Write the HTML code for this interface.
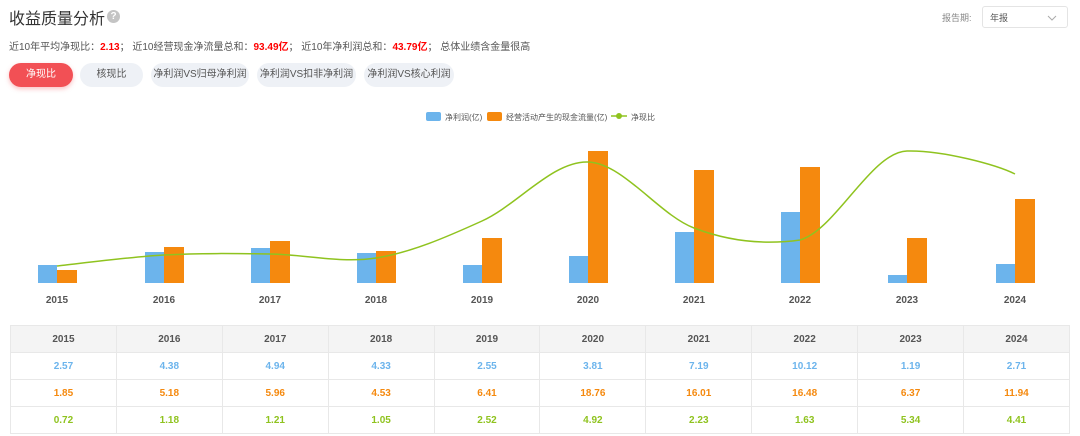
<!DOCTYPE html>
<html><head><meta charset="utf-8"><style>
body{margin:0;width:1080px;height:436px;background:#fff;font-family:"Liberation Sans","Noto Sans CJK SC",sans-serif;position:relative;overflow:hidden;color:#333}
.a{position:absolute;white-space:nowrap}
.btn{position:absolute;top:63px;height:24px;border-radius:12px;background:#eef1f6;color:#555;font-size:10px;line-height:24px;display:flex;justify-content:center;white-space:nowrap}
table{position:absolute;left:10px;top:325px;width:1060px;border-collapse:collapse;font-size:10px;font-weight:bold;text-align:center;table-layout:fixed}
td{border:1px solid #e8e8e8;height:26px;padding:0}
tr.h td{background:#f4f4f4;color:#555}
</style></head><body>
<div class="a" style="left:9px;top:5px;font-size:16px;color:#333">收益质量分析</div>
<div class="a" style="left:107px;top:10px;width:13px;height:13px;border-radius:7px;background:#c4c4c4;color:#fff;font-size:10px;line-height:13px;text-align:center;font-weight:bold">?</div>
<div class="a" style="left:9px;top:38px;font-size:10px;color:#555">近10年平均净现比：<b style="color:#f00">2.13</b>； 近10经营现金净流量总和：<b style="color:#f00">93.49亿</b>； 近10年净利润总和：<b style="color:#f00">43.79亿</b>；  总体业绩含金量很高</div>
<div class="a" style="left:942px;top:11px;font-size:9px;color:#888">报告期:</div>
<div class="a" style="left:982px;top:6px;width:86px;height:22px;border:1px solid #e4e4e4;border-radius:3px;font-size:9px;line-height:22px;color:#555;box-sizing:border-box;padding-left:7px">年报<svg style="position:absolute;right:10px;top:8px" width="10" height="6"><path d="M1 1L5 5L9 1" fill="none" stroke="#aaa" stroke-width="1"/></svg></div>
<div class="btn" style="left:9px;width:64px;background:#f25055;color:#fff;box-shadow:0 2px 5px rgba(242,80,85,.35)">净现比</div>
<div class="btn" style="left:80px;width:63px">核现比</div>
<div class="btn" style="left:151px;width:98px">净利润VS归母净利润</div>
<div class="btn" style="left:257px;width:99px">净利润VS扣非净利润</div>
<div class="btn" style="left:364px;width:90px">净利润VS核心利润</div>
<svg class="a" style="left:0;top:0" width="1080" height="320">
<g font-size="8" fill="#555">
<rect x="426" y="112" width="15" height="9" rx="2" fill="#6cb4ec"/><text x="445" y="120">净利润(亿)</text>
<rect x="487" y="112" width="15" height="9" rx="2" fill="#f5890e"/><text x="506" y="120">经营活动产生的现金流量(亿)</text>
<line x1="611" y1="116" x2="627" y2="116" stroke="#8fc31f" stroke-width="1.5"/><circle cx="619" cy="116" r="3" fill="#8fc31f"/><text x="631" y="120">净现比</text>
</g>
<g fill="#6cb4ec">
<rect x="38" y="265" width="19" height="18"/><rect x="145" y="252" width="19" height="31"/><rect x="251" y="248" width="19" height="35"/><rect x="357" y="253" width="19" height="30"/><rect x="463" y="265" width="19" height="18"/><rect x="569" y="256" width="19" height="27"/><rect x="675" y="232" width="19" height="51"/><rect x="781" y="212" width="19" height="71"/><rect x="888" y="275" width="19" height="8"/><rect x="996" y="264" width="19" height="19"/>
</g>
<g fill="#f5890e">
<rect x="57" y="270" width="20" height="13"/><rect x="164" y="247" width="20" height="36"/><rect x="270" y="241" width="20" height="42"/><rect x="376" y="251" width="20" height="32"/><rect x="482" y="238" width="20" height="45"/><rect x="588" y="151" width="20" height="132"/><rect x="694" y="170" width="20" height="113"/><rect x="800" y="167" width="20" height="116"/><rect x="907" y="238" width="20" height="45"/><rect x="1015" y="199" width="20" height="84"/>
</g>
<path d="M57 266C74.8 264.2 128.5 257 164 255C199.5 253 234.7 253.5 270 254C305.3 254.5 340.7 263.5 376 258C411.3 252.5 446.7 237 482 221C517.3 205 552.7 160.8 588 162C623.3 163.2 658.7 214.5 694 228C729.3 241.5 764.5 245 800 240C835.5 230.2 871.2 152 907 151C942.8 150 997 165 1015 174" fill="none" stroke="#8fc31f" stroke-width="1.5"/>
<g font-size="10" font-weight="bold" fill="#555" text-anchor="middle">
<text x="57" y="303">2015</text><text x="164" y="303">2016</text><text x="270" y="303">2017</text><text x="376" y="303">2018</text><text x="482" y="303">2019</text><text x="588" y="303">2020</text><text x="694" y="303">2021</text><text x="800" y="303">2022</text><text x="907" y="303">2023</text><text x="1015" y="303">2024</text>
</g>
</svg>
<table>
<tr class="h"><td>2015</td><td>2016</td><td>2017</td><td>2018</td><td>2019</td><td>2020</td><td>2021</td><td>2022</td><td>2023</td><td>2024</td></tr>
<tr style="color:#6cb4ec"><td>2.57</td><td>4.38</td><td>4.94</td><td>4.33</td><td>2.55</td><td>3.81</td><td>7.19</td><td>10.12</td><td>1.19</td><td>2.71</td></tr>
<tr style="color:#f5890e"><td>1.85</td><td>5.18</td><td>5.96</td><td>4.53</td><td>6.41</td><td>18.76</td><td>16.01</td><td>16.48</td><td>6.37</td><td>11.94</td></tr>
<tr style="color:#8fc31f"><td>0.72</td><td>1.18</td><td>1.21</td><td>1.05</td><td>2.52</td><td>4.92</td><td>2.23</td><td>1.63</td><td>5.34</td><td>4.41</td></tr>
</table>
</body></html>
